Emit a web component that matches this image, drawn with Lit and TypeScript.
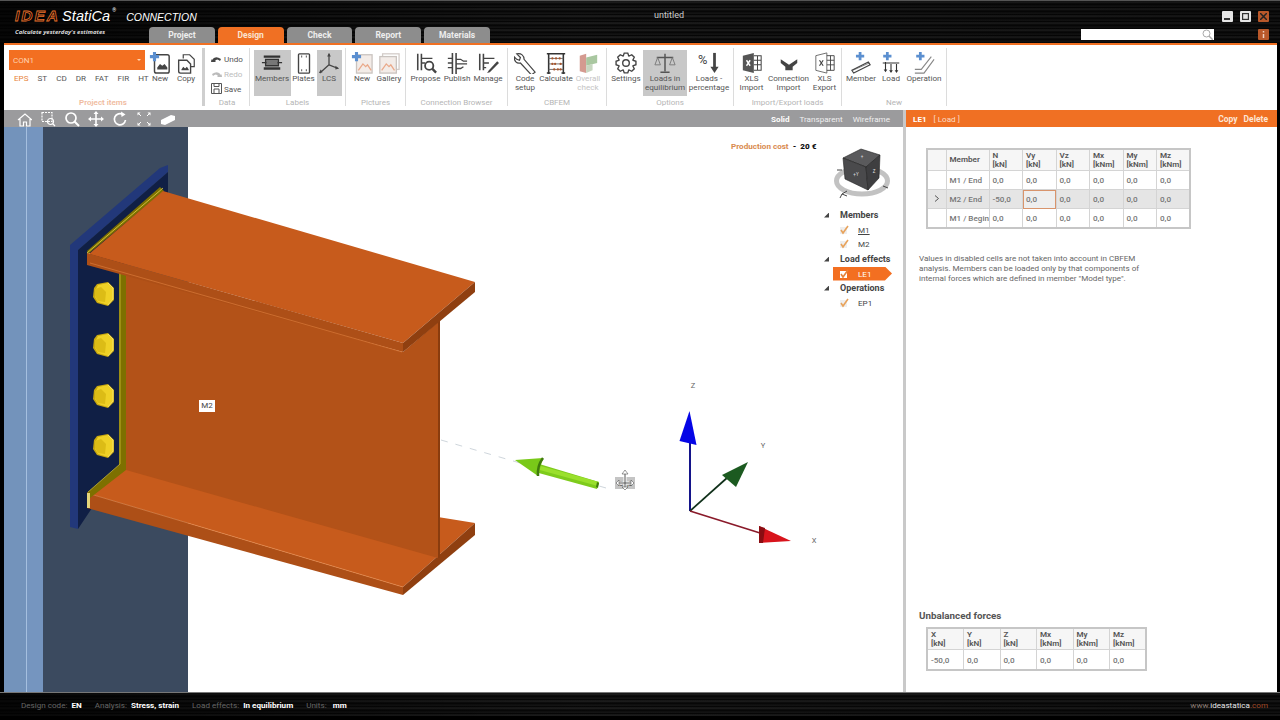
import { LitElement, html, svg, css } from "lit";
import { customElement } from "lit/decorators.js";

const S = (body: unknown, size = 22) => html`<svg
  width="${size}"
  height="${size}"
  viewBox="0 0 24 24"
  fill="none"
  stroke="#444"
  stroke-width="1.4"
>${body}</svg>`;

const PLUS = svg`<path d="M6 0v10M1 5h10" stroke="#5b8fd0" stroke-width="3.4" />`;
const PLUS_RIGHT = svg`<path d="M8 0v9M3.500 4.500h9" stroke="#5b8fd0" stroke-width="3" />`;

const gearPath = () => {
  const teeth = 8;
  let d = "";
  for (let i = 0; i < teeth; i++) {
    const a = (i / teeth) * Math.PI * 2;
    const w = Math.PI / teeth;
    const pts = [
      [8.2, a - w * 0.95],
      [11, a - w * 0.45],
      [11, a + w * 0.45],
      [8.2, a + w * 0.95],
    ];
    pts.forEach(([r, t], j) => {
      const x = (12 + r * Math.cos(t)).toFixed(2);
      const y = (12 + r * Math.sin(t)).toFixed(2);
      d += `${i === 0 && j === 0 ? "M" : "L"}${x} ${y}`;
    });
  }
  return d + "Z";
};

const ICONS: Record<string, unknown> = {
  newDoc: S(svg`
    <rect x="6" y="3" width="16" height="20" rx="2" stroke-width="1.6" />
    <path d="M9 17l3-4 2.500 2 2.500-2 3 4v2H9z" fill="#444" stroke="none" />
    ${PLUS}`),
  copyDoc: S(svg`
    <path d="M9 7V3h7l5 5v8h-4" stroke-width="1.3" />
    <path d="M4 9h9l4 4v10H6a2 2 0 0 1-2-2z" fill="#fff" stroke-width="1.5" />
    <path d="M7 19l2-3 2 2 2-2 2 3v1H7z" fill="#444" stroke="none" />`),
  members: S(svg`
    <path d="M3 5h18M3 18h18" stroke="#333" stroke-width="2.600" />
    <path d="M5 8h14v7H5z" fill="#777" stroke="#333" />
    <path d="M1 11.500h5M18 11.500h5" stroke="#333" />`),
  plates: S(svg`
    <rect x="6" y="2" width="12" height="21" rx="1" stroke-width="1.5" />
    <path d="M9 5h1M15 5h-1M9 20h1M15 20h-1" stroke-width="2.200" />`),
  lcs: S(svg`
    <path d="M12 14V2M12 14l10 4M12 14L2 23" stroke-width="1.4" />
    <path d="M12 1l-2 4h4zM23 18l-4-3v4zM1 23l4-1-2-3z" fill="#444" stroke="none" />`),
  picNew: S(svg`
    <rect x="6" y="3" width="17" height="20" fill="#f3ece8" stroke="#c9c3bf" />
    <path d="M8 20l5-7 3 3 2-2 4 6" stroke="#eaa98a" />
    ${PLUS}`),
  gallery: S(svg`
    <rect x="5" y="2" width="18" height="17" stroke="#d3ccc8" />
    <rect x="2" y="5" width="18" height="18" fill="#f3ece8" stroke="#c9c3bf" />
    <path d="M4 20l5-7 3 3 2-2 4 6" stroke="#eaa98a" />`),
  propose: S(svg`
    <path d="M3 2v18M7 2v18" stroke-width="1.700" />
    <path d="M7 7h12M7 12h4" />
    <circle cx="15.500" cy="15" r="4.500" stroke-width="2" />
    <path d="M19 18.500l4 4" stroke-width="2.600" />`),
  publish: S(svg`
    <path d="M7 1v23M11 1v23" stroke-width="1.700" />
    <path d="M2 7h5M2 12h5M2 17h5M11 8h5l3 2h4M11 13h12M11 18h5l3-2" />`),
  manage: S(svg`
    <path d="M3 2v18M7 2v18" stroke-width="1.700" />
    <path d="M7 7h12M7 12h6M7 17h3" />
    <path d="M22 10l-9 10-2 3 3-1 10-10z" fill="#444" stroke="none" />`),
  wrench: S(svg`
    <path d="M3 2l4 4-1 3-3-1-3-3c0 5 3 8 7 7l12 13 4-3L11 8C11 4 8 1 3 2z" stroke-width="1.300" />`),
  abacus: S(svg`
    <path d="M4 1v23M20 1v23M2 2h20M2 23h4M18 23h4" stroke="#333" stroke-width="1.700" />
    <path d="M4 7h16M4 13h16M4 19h16" stroke="#666" stroke-width="1" />
    <path d="M8 7h.1M12 7h.1M16 7h.1M8 13h.1M11 13h.1M17 13h.1M10 19h.1M14 19h.1M17 19h.1"
      stroke="#a8552c" stroke-width="2.400" stroke-linecap="round" />`),
  overall: S(svg`
    <path d="M3 4l7-2v21l-7-2z" fill="#d49a90" stroke="none" />
    <path d="M10 6l12-3v9l-12 3z" fill="#a9c7a0" stroke="none" />
    <path d="M10 15l7-2v7l-7 3z" fill="#c7d6c0" stroke="none" />`),
  gear: S(svg`
    <path d="${gearPath()}" stroke-width="1.500" />
    <circle cx="12" cy="12" r="3.600" stroke-width="1.500" />`),
  scales: S(svg`
    <path d="M12 2v19M7 22h10M3 6h18" stroke="#555" stroke-width="1.600" />
    <path d="M4 6L1 14h6zM20 6l-3 8h6z" stroke="#777" stroke-width="1" />`),
  percent: html`<svg width="22" height="22" viewBox="0 0 24 24">
    <text x="0" y="13" font-size="14" font-family="Roboto" fill="#444">%</text>
    <path d="M18 1v16" stroke="#444" stroke-width="3" />
    <path d="M13.500 16h9L18 23z" fill="#444" />
  </svg>`,
  xlsIn: S(svg`
    <path d="M2 4l12-3v22L2 20z" fill="#555" stroke="none" />
    <path d="M14 4h8v16h-8M14 9h8M14 14h8M18 4v16" stroke-width="1.100" />
    <path d="M6 9l4 6M10 9l-4 6" stroke="#fff" stroke-width="1.500" />`),
  connIn: S(svg`
    <path d="M3 8l9 6 9-6v4l-5 4v4H8v-4l-5-4z" fill="#444" stroke="none" />`),
  xlsOut: S(svg`
    <path d="M2 4l12-3v22L2 20z" fill="#fff" stroke="#666" stroke-width="1" />
    <path d="M14 4h8v16h-8M14 9h8M14 14h8M18 4v16" stroke-width="1" />
    <path d="M6 9l4 6M10 9l-4 6" stroke="#444" stroke-width="1.300" />`),
  addMember: S(svg`
    <path d="M2 20L20 11l2 3L4 23z" stroke-width="1.200" />
    <path d="M3 20l18-8" stroke-width=".7" />
    ${svg`<g transform="translate(3 0)">${PLUS_RIGHT}</g>`}`),
  addLoad: S(svg`
    <path d="M6 11v9M12 13v8M18 13v8M3 12h18" stroke="#333" stroke-width="1.200" />
    <path d="M4 19h4l-2 3zM10 20h4l-2 3zM16 20h4l-2 3z" fill="#333" stroke="none" />
    ${PLUS_RIGHT}`),
  addOp: S(svg`
    <path d="M2 23h10L23 8M2 19h7L20 5" stroke="#888" stroke-width="1.200" />
    ${PLUS_RIGHT}`),
};

const TOOL_ICONS = [
  svg`<path d="M2 9l7-6 7 6M4 8v7h3.500v-4h3v4H14V8" />`,
  svg`<rect x="2" y="1.500" width="10" height="9" stroke-dasharray="2 1" /><circle cx="10.500" cy="10.500" r="3" /><path d="M13 13l2 2" />`,
  svg`<circle cx="7" cy="7" r="5" stroke-width="1.700" /><path d="M10.500 10.500L15 15" stroke-width="2" />`,
  svg`<path d="M8 1v14M1 8h14" stroke-width="1.600" /><path d="M8 0l2.500 3h-5zM8 16l2.500-3h-5zM0 8l3-2.500v5zM16 8l-3-2.500v5z" fill="#fff" stroke="none" />`,
  svg`<path d="M13.500 9A5.600 5.600 0 1 1 11 3.500" stroke-width="1.700" /><path d="M9 .5l4.500 3-4 2.500z" fill="#fff" stroke="none" />`,
  svg`<path d="M2 2l3 3M14 2l-3 3M2 14l3-3M14 14l-3-3" stroke-width="1" /><path d="M1.500 1.500h3l-3 3zM14.500 1.500h-3l3 3zM1.500 14.500h3l-3-3zM14.500 14.500h-3l3-3z" fill="#fff" stroke="none" />`,
  svg`<path d="M1 9l10-5 4 1v4L5 14l-4-1z" fill="#fff" stroke="none" />`,
];

interface Btn {
  label: string[];
  icon: string;
  w: number;
  on?: boolean;
  off?: boolean;
}

interface Group {
  name: string;
  w: number;
  btns: Btn[];
}

const GROUPS: Group[] = [
  {
    name: "Labels",
    w: 96,
    btns: [
      { label: ["Members"], icon: "members", w: 37, on: true },
      { label: ["Plates"], icon: "plates", w: 26 },
      { label: ["LCS"], icon: "lcs", w: 25, on: true },
    ],
  },
  {
    name: "Pictures",
    w: 60,
    btns: [
      { label: ["New"], icon: "picNew", w: 27 },
      { label: ["Gallery"], icon: "gallery", w: 27 },
    ],
  },
  {
    name: "Connection Browser",
    w: 102,
    btns: [
      { label: ["Propose"], icon: "propose", w: 32 },
      { label: ["Publish"], icon: "publish", w: 31 },
      { label: ["Manage"], icon: "manage", w: 31 },
    ],
  },
  {
    name: "CBFEM",
    w: 99,
    btns: [
      { label: ["Code", "setup"], icon: "wrench", w: 30 },
      { label: ["Calculate"], icon: "abacus", w: 32 },
      { label: ["Overall", "check"], icon: "overall", w: 32, off: true },
    ],
  },
  {
    name: "Options",
    w: 127,
    btns: [
      { label: ["Settings"], icon: "gear", w: 34 },
      { label: ["Loads in", "equilibrium"], icon: "scales", w: 44, on: true },
      { label: ["Loads -", "percentage"], icon: "percent", w: 44 },
    ],
  },
  {
    name: "Import/Export loads",
    w: 108,
    btns: [
      { label: ["XLS", "Import"], icon: "xlsIn", w: 32 },
      { label: ["Connection", "Import"], icon: "connIn", w: 42 },
      { label: ["XLS", "Export"], icon: "xlsOut", w: 30 },
    ],
  },
  {
    name: "New",
    w: 105,
    btns: [
      { label: ["Member"], icon: "addMember", w: 32 },
      { label: ["Load"], icon: "addLoad", w: 28 },
      { label: ["Operation"], icon: "addOp", w: 38 },
    ],
  },
];

const TREE = [
  { title: "Members", items: [{ name: "M1", link: true }, { name: "M2" }] },
  { title: "Load effects", items: [{ name: "LE1", active: true }] },
  { title: "Operations", items: [{ name: "EP1" }] },
];

const LOADS = [
  ["M1 / End", "0,0", "0,0", "0,0", "0,0", "0,0", "0,0"],
  ["M2 / End", "-50,0", "0,0", "0,0", "0,0", "0,0", "0,0"],
  ["M1 / Begin", "0,0", "0,0", "0,0", "0,0", "0,0", "0,0"],
];

const bolt = (cy: number) => svg`
  <g transform="translate(0 ${cy - 294})">
    <path d="M97 284l11-2 6 6v12l-6 6-11-3-4-6 1-9z" fill="#c9a80f" />
    <path d="M98 285l10-2 5 5v11l-5 6-10-3-3-5 1-8z" fill="#efd126" />
    <path d="M95 289l6-2 5 5-1 10-7-1-3-5z" fill="#dcbc16" />
    <path d="M108 283l5 5v11l-5 6" stroke="#f7e97a" stroke-width=".8" fill="none" />
  </g>`;

@customElement("app-root")
export class AppRoot extends LitElement {
  static styles = css`
    :host {
      display: block;
      width: 1280px;
      height: 720px;
      overflow: hidden;
      background: #000;
      font-family: Roboto, "Open Sans", sans-serif;
      font-size: 8.1px;
      color: #555;
    }
    .streaks {
      background:
        linear-gradient(90deg, rgba(0, 0, 0, 0.75), rgba(0, 0, 0, 0.1) 45%, rgba(0, 0, 0, 0.3)),
        repeating-linear-gradient(180deg, #0a0a0a 0, #2b2b2b 1px, #111 2px, #050505 4px, #1d1d1d 5px, #000 7px);
    }
    .header {
      display: flex;
      height: 43px;
      box-sizing: border-box;
      border-top: 1px solid #555;
    }
    .brand {
      width: 149px;
      flex: none;
      padding: 6px 0 0 15px;
      box-sizing: border-box;
      color: #fff;
      white-space: nowrap;
    }
    .brand-line {
      display: flex;
      align-items: baseline;
      height: 15px;
    }
    .idea {
      font: italic bold 15.5px "Liberation Sans", sans-serif;
      color: transparent;
      -webkit-text-stroke: 0.8px #e8702a;
      letter-spacing: 2px;
      width: 47px;
      flex: none;
    }
    .statica {
      font: italic 14.5px "Liberation Sans", sans-serif;
      letter-spacing: 0.1px;
      flex: none;
    }
    .reg {
      font-size: 5px;
      margin: 0 0 0 2px;
      align-self: flex-start;
      flex: none;
    }
    .product {
      font: italic 10.5px "Liberation Sans", sans-serif;
      margin-left: 10px;
      flex: none;
    }
    .tagline {
      font: italic bold 6px "Open Sans", sans-serif;
      color: #ddd;
      margin-top: 6px;
    }
    .tabs {
      display: flex;
      gap: 3px;
      align-self: flex-end;
      width: 341px;
      flex: none;
    }
    .tab {
      width: 66px;
      height: 16px;
      background: #8d8d8d;
      border-radius: 4px 4px 0 0;
      color: #eee;
      font-weight: 700;
      font-size: 8.5px;
      line-height: 16px;
      text-align: center;
    }
    .tab.active {
      background: #f07023;
      color: #fbe3d2;
    }
    .title {
      width: 358px;
      flex: none;
      text-align: center;
      color: #ccc;
      font-size: 9px;
      padding-top: 9px;
    }
    .controls {
      flex: 1;
      display: flex;
      flex-direction: column;
      align-items: flex-end;
      padding: 10px 11px 0 0;
      gap: 7px;
    }
    .win-row {
      display: flex;
      gap: 7px;
      align-items: center;
    }
    .win-btn {
      width: 11px;
      height: 11px;
      border-radius: 1px;
      background: #e6e6e6;
      display: flex;
      align-items: center;
      justify-content: center;
    }
    .win-btn.hot {
      background: #b9582a;
    }
    .search {
      width: 133px;
      height: 11px;
      background: #fff;
      display: flex;
      justify-content: flex-end;
      margin-right: 44px;
      padding-right: 1px;
      box-sizing: border-box;
    }
    .info-row {
      gap: 0;
    }
    .frame {
      margin: 0 3px 0 4px;
      background: #fff;
    }
    .accent {
      height: 2px;
      background: #f07023;
    }
    .ribbon {
      display: flex;
      height: 65px;
      box-sizing: border-box;
      padding-top: 5px;
      background: #fff;
    }
    .group {
      display: flex;
      flex-direction: column;
      align-items: center;
      border-right: 1px solid #dcdcdc;
      box-sizing: border-box;
      height: 58px;
      margin-top: -2px;
      padding-top: 2px;
      flex: none;
    }
    .group-btns {
      display: flex;
      height: 46px;
      flex: none;
    }
    .group-name {
      color: #b5b5b5;
      font-size: 8px;
      line-height: 12px;
      margin-top: 1px;
    }
    .group-project {
      width: 201px;
      border-right: 3px solid #cfcfcf;
      align-items: stretch;
    }
    .project-top {
      display: flex;
      height: 46px;
      padding-left: 5px;
    }
    .project-left {
      width: 138px;
      flex: none;
    }
    .combo {
      width: 136px;
      height: 20px;
      background: #f36f21;
      color: #ffd3b0;
      line-height: 20px;
      padding: 0 4px;
      box-sizing: border-box;
      display: flex;
      justify-content: space-between;
      align-items: center;
    }
    .combo-caret {
      width: 0;
      height: 0;
      border: 2px solid transparent;
      border-top: 2px solid #ffd3b0;
      margin-top: 2px;
    }
    .subs {
      display: flex;
      gap: 9px;
      padding: 2px 0 0 5px;
      line-height: 12px;
      color: #555;
    }
    .subs .sel {
      color: #e8843c;
    }
    .group-project .group-name {
      text-align: center;
      color: #f0bb9e;
      font-weight: 600;
    }
    .group-data {
      width: 45px;
    }
    .small-list {
      height: 46px;
      width: 100%;
      padding: 1px 0 0 6px;
      box-sizing: border-box;
    }
    .small {
      display: flex;
      align-items: center;
      gap: 2px;
      height: 15px;
      white-space: nowrap;
    }
    .small.off {
      color: #bdbdbd;
    }
    .btn {
      display: flex;
      flex-direction: column;
      align-items: center;
      height: 46px;
      box-sizing: border-box;
      padding-top: 2px;
      line-height: 8.5px;
      text-align: center;
      white-space: nowrap;
      flex: none;
    }
    .btn.on {
      background: #c8c8c8;
    }
    .btn.off {
      color: #c4c4c4;
    }
    .btn-icon {
      height: 22px;
    }
    .btn-text {
      line-height: 8.5px;
    }
    .work {
      display: flex;
      height: 582px;
    }
    .left {
      width: 899px;
      flex: none;
      display: flex;
      flex-direction: column;
    }
    .bar {
      height: 17px;
      flex: none;
      display: flex;
      align-items: center;
      box-sizing: border-box;
      color: #fff;
    }
    .toolbar {
      background: #9b9b9d;
      padding: 0 13px 0 12px;
    }
    .tool-icons {
      display: flex;
      gap: 8px;
    }
    .tool-icon {
      stroke: #fff;
      fill: none;
      stroke-width: 1.2;
    }
    .modes {
      margin-left: auto;
      display: flex;
      gap: 10px;
      color: #f0f0f0;
    }
    .modes b {
      font-weight: 700;
      color: #fff;
    }
    .canvas {
      position: relative;
      flex: 1;
      overflow: hidden;
      background: #fff;
    }
    .scene {
      position: absolute;
      inset: 0;
    }
    .member-tag {
      position: absolute;
      left: 195px;
      top: 273px;
      width: 16px;
      height: 12px;
      background: #fff;
      color: #444;
      font-size: 8px;
      line-height: 12px;
      text-align: center;
    }
    .cost {
      position: absolute;
      left: 727px;
      top: 14px;
      font-weight: 700;
      color: #d98a4e;
      white-space: nowrap;
    }
    .cost b {
      color: #111;
    }
    .tree {
      position: absolute;
      left: 820px;
      top: 80.500px;
      width: 72px;
    }
    .tree-head {
      display: flex;
      align-items: center;
      height: 15px;
      font-weight: 700;
      color: #444;
      white-space: nowrap;
      font-size: 9px;
    }
    .caret {
      width: 5px;
      height: 5px;
      background: #444;
      clip-path: polygon(100% 0, 100% 100%, 0 100%);
      margin: 0 11px 0 0;
      flex: none;
    }
    .tree-item {
      display: flex;
      align-items: center;
      gap: 9px;
      height: 14.500px;
      padding-left: 15px;
      color: #444;
    }
    .tree-item .link {
      text-decoration: underline;
    }
    .tree-item.active {
      background: #f36f21;
      color: #fff;
      margin-left: 9px;
      width: 59px;
      height: 14px;
      padding-left: 6px;
      box-sizing: border-box;
      clip-path: polygon(0 0, 88% 0, 100% 50%, 88% 100%, 0 100%);
    }
    .split {
      width: 3px;
      flex: none;
      background: #c9c9c9;
    }
    .right {
      flex: 1;
      display: flex;
      flex-direction: column;
      min-width: 0;
    }
    .panel-head {
      background: #f07023;
      padding: 0 9px 0 7px;
      color: #fbdcc6;
    }
    .panel-head b {
      color: #fff;
      margin-right: 7px;
      font-weight: 700;
    }
    .panel-actions {
      margin-left: auto;
      display: flex;
      gap: 6px;
      font-weight: 700;
      color: #fde6d6;
      font-size: 8.5px;
    }
    .panel-body {
      flex: 1;
      display: flex;
      flex-direction: column;
      padding: 21px 0 21px 13px;
      background: #fff;
    }
    table {
      border-collapse: collapse;
      table-layout: fixed;
      margin-left: 7px;
      border: 2px solid #c6c6c6;
      color: #777;
    }
    .loads {
      width: 265px;
    }
    .unbalanced {
      width: 221px;
    }
    col.mark {
      width: 19px;
    }
    col.member {
      width: 43px;
    }
    th,
    td {
      border: 1px solid #d4d4d4;
      padding: 0 0 0 3px;
      font-weight: 500;
      text-align: left;
      height: 18px;
      white-space: nowrap;
      overflow: hidden;
    }
    th {
      height: 20px;
      background: #f6f6f6;
      color: #555;
      line-height: 9.500px;
      font-weight: 600;
    }
    .unbalanced td {
      height: 19px;
    }
    tr.sel td {
      background: #e5e5e5;
    }
    tr.sel td.cur {
      background: #eee;
      outline: 1px solid #d8946c;
      outline-offset: -1px;
    }
    td.mark {
      text-align: center;
      padding: 0;
    }
    .note {
      margin: 24px 0 0;
      line-height: 10px;
      color: #666;
    }
    .spacer {
      flex: 1;
    }
    .unb-title {
      font-weight: 700;
      font-size: 9.800px;
      color: #555;
      margin-bottom: 5px;
      line-height: 13px;
    }
    .status {
      height: 24px;
      display: flex;
      align-items: center;
      padding: 0 12px 0 21px;
      box-sizing: border-box;
      color: #666;
      border-top: 1px solid #777;
    }
    .status span {
      margin-right: 13px;
      white-space: nowrap;
    }
    .status b {
      color: #fff;
      font-weight: 700;
      margin-left: 2px;
    }
    .site {
      margin-left: auto;
      color: #8a7a72;
    }
    .site i {
      color: #e8e8e8;
      font-style: normal;
    }
    .site u {
      color: #a04a28;
      text-decoration: none;
    }
  `;

  renderHeader() {
    return html`<div class="header streaks">
      <div class="brand">
        <div class="brand-line">
          <span class="idea">IDEA</span><span class="statica">StatiCa</span
          ><span class="reg">®</span><span class="product">CONNECTION</span>
        </div>
        <div class="tagline">Calculate yesterday's estimates</div>
      </div>
      <div class="tabs">
        ${["Project", "Design", "Check", "Report", "Materials"].map(
          (t) => html`<div class="tab ${t === "Design" ? "active" : ""}">${t}</div>`
        )}
      </div>
      <div class="title">untitled</div>
      <div class="controls">
        <div class="win-row">
          <div class="win-btn">
            <svg width="7" height="7"><path d="M0 6h6" stroke="#333" stroke-width="2" /></svg>
          </div>
          <div class="win-btn">
            <svg width="7" height="7"><rect x=".5" y=".5" width="6" height="6" fill="none" stroke="#333" stroke-width="1.400" /></svg>
          </div>
          <div class="win-btn hot">
            <svg width="7" height="7"><path d="M0 0l7 7M7 0l-7 7" stroke="#222" stroke-width="1.500" /></svg>
          </div>
        </div>
        <div class="win-row info-row">
          <div class="search">
            <svg width="11" height="11" viewBox="0 0 11 11" fill="none" stroke="#aaa">
              <circle cx="4.500" cy="4.500" r="3.500" /><path d="M7 7l4 4" stroke-width="1.500" />
            </svg>
          </div>
          <div class="win-btn hot">
            <svg width="3" height="7"><path d="M1.500 0v1.500M1.500 3v4" stroke="#f0d0c0" stroke-width="1.500" /></svg>
          </div>
        </div>
      </div>
    </div>`;
  }

  renderRibbon() {
    return html`<div class="ribbon">
      <div class="group group-project">
        <div class="project-top">
          <div class="project-left">
            <div class="combo">CON1<span class="combo-caret"></span></div>
            <div class="subs">
              ${["EPS", "ST", "CD", "DR", "FAT", "FIR", "HT"].map(
                (s) => html`<span class="${s === "EPS" ? "sel" : ""}">${s}</span>`
              )}
            </div>
          </div>
          ${this.renderBtn({ label: ["New"], icon: "newDoc", w: 26 })}
          ${this.renderBtn({ label: ["Copy"], icon: "copyDoc", w: 26 })}
        </div>
        <div class="group-name">Project items</div>
      </div>
      <div class="group group-data">
        <div class="small-list">
          <div class="small">
            <svg width="11" height="10" viewBox="0 0 11 10"><path d="M1 6q3-5 9-1l-1 2q-3-3-5 0l1 1H0l.5-3z" fill="#444" /></svg>Undo
          </div>
          <div class="small off">
            <svg width="11" height="10" viewBox="0 0 11 10"><path d="M10 6Q7 1 1 5l1 2q3-3 5 0L6 8h5l-.5-3z" fill="#bbb" /></svg>Redo
          </div>
          <div class="small">
            <svg width="11" height="11" viewBox="0 0 11 11" fill="none" stroke="#555"><path d="M.5.500h10v10H.500zM3 10.500V6h5v4.500M3 .5v3h5v-3" /></svg>Save
          </div>
        </div>
        <div class="group-name">Data</div>
      </div>
      ${GROUPS.map(
        (g) => html`<div class="group" style="width:${g.w}px">
          <div class="group-btns">${g.btns.map((b) => this.renderBtn(b))}</div>
          <div class="group-name">${g.name}</div>
        </div>`
      )}
    </div>`;
  }

  renderBtn(b: Btn) {
    return html`<div
      class="btn ${b.on ? "on" : ""} ${b.off ? "off" : ""}"
      style="width:${b.w}px"
    >
      <div class="btn-icon">${ICONS[b.icon]}</div>
      ${b.label.map((l) => html`<div class="btn-text">${l}</div>`)}
    </div>`;
  }

  renderScene() {
    return html`<svg class="scene" width="899" height="565" viewBox="4 127 899 565">
      <rect x="4" y="127" width="22" height="565" fill="#7393bb" />
      <rect x="26" y="127" width="1" height="565" fill="#a5bfdf" />
      <rect x="27" y="127" width="16" height="565" fill="#7595bf" />
      <rect x="43" y="127" width="145" height="565" fill="#3b4a5f" />

      <path d="M70 245L160 168l8-3v7L78 250v279l-8-2z" fill="#22387a" />
      <path d="M78 250l90-78v24l-48 76v194L78 529z" fill="#101f45" />

      <path d="M87 493l35-27 353 57-72 64z" fill="#c75b1c" />
      <path d="M87 493l316 94v8L87 508z" fill="#ad4f17" />
      <path d="M403 587l72-64v12l-72 60z" fill="#8f3f10" />
      <path d="M87 493l316 94" stroke="#e8894a" stroke-width=".7" fill="none" />

      <path d="M126 272L403 352l35-30v236L126 470z" fill="#b35218" />
      <path d="M438 318h2v240h-2z" fill="#8a3c0e" />
      <path d="M119 272h7v198l-36 28-3-5 32-28z" fill="#7d7000" />
      <path d="M120 272v192L88 492" stroke="#d9c63a" stroke-width=".7" fill="none" />
      <path d="M87 493h3v15h-3zM87 253h3v12h-3z" fill="#e6d67a" />

      <path d="M87 251l73-64 4 4-76 63z" fill="#7d7000" />
      <path d="M87 253l76-65" stroke="#e4d04a" stroke-width=".8" fill="none" />
      <path d="M89 254l74-63 312 91-72 61z" fill="#c75b1c" />
      <path d="M87 253l316 90v9L87 265z" fill="#ad4f17" />
      <path d="M403 343l72-61v10l-72 60z" fill="#8f3f10" />
      <path d="M90 263l312 89" stroke="#e0813f" stroke-width=".6" fill="none" />

      ${[294, 345, 396, 446].map(bolt)}

      <path d="M441 440L606 488" stroke="#cfd6dc" stroke-width="1" stroke-dasharray="7 8" />
      <path d="M536 463l-1 9 62 17 2-7z" fill="#7ecb1c" />
      <path d="M536 469l62 17 1-4-62-17z" fill="#9ae02c" />
      <path d="M597 482l2 1-1 5-2-1z" fill="#3f7a0c" />
      <path d="M515 460l28-2-5 18z" fill="#79c919" />
      <path d="M543 458q-6 8-5 18" stroke="#3f7a0c" stroke-width="2.500" fill="none" />

      <rect x="615" y="477" width="20" height="12" fill="#c4c4c4" />
      <text x="625" y="486" text-anchor="middle" font-size="7" fill="#444" font-family="Roboto">-50,0</text>
      <path d="M625 471v17M617 483h16" stroke="#fff" stroke-width="3" />
      <path d="M625 471v17M617 483h16" stroke="#555" stroke-width="1" />
      <path d="M625 470l-3 4h6zM616 483l3-3v6zM634 483l-3-3v6zM625 490l-3-3h6z" fill="#fff" stroke="#555" stroke-width=".6" />

      <path d="M690 511V440" stroke="#14148a" stroke-width="2" />
      <path d="M689.500 411l-10 30 17 4z" fill="#0505e6" />
      <path d="M690 511l38-34" stroke="#10301a" stroke-width="1.700" />
      <path d="M748 462l-26 13 14 12z" fill="#1c5a20" />
      <path d="M690 511l70 22" stroke="#8a1a2a" stroke-width="1.700" />
      <path d="M759 526l32 15-32 2z" fill="#d8141c" />
      <path d="M759 526l6 2-2 15h-4z" fill="#8a0d12" />
      <g font-family="Roboto" font-size="7.500" fill="#666" text-anchor="middle">
        <text x="693" y="388">Z</text>
        <text x="763" y="448">Y</text>
        <text x="814" y="543">X</text>
      </g>

      <g>
        <ellipse cx="862" cy="181" rx="25.500" ry="13" fill="none" stroke="#c2c2c2" stroke-width="5" />
        <path d="M847 191l-5 3M842 194l-2 4M842 194l5 2M842 170h-5M883 186l5 2" stroke="#444" stroke-width="1" />
        <path d="M843 158l18-9 19 6-14 12z" fill="#5a5a5c" stroke="#222" stroke-width=".6" />
        <path d="M843 158l23 9 2 23-23-11z" fill="#4a4a4c" stroke="#222" stroke-width=".6" />
        <path d="M866 167l14-12-1 23-11 12z" fill="#3e3e40" stroke="#222" stroke-width=".6" />
        <g font-family="Roboto" font-size="4.500" fill="#ddd" text-anchor="middle">
          <text x="856" y="176">+Y</text>
          <text x="874" y="173">Z</text>
          <text x="862" y="158">+</text>
        </g>
      </g>
    </svg>`;
  }

  renderTree() {
    return html`<div class="tree">
      ${TREE.map(
        (sec) => html`<div class="tree-head"><span class="caret"></span>${sec.title}</div>
          ${sec.items.map(
            (it: { name: string; link?: boolean; active?: boolean }) => html`<div
              class="tree-item ${it.active ? "active" : ""}"
            >
              <svg width="10" height="10" viewBox="0 0 10 10">
                <rect x="1" y="2" width="7" height="7" fill="${it.active ? "#fff" : "#eee"}" />
                <path
                  d="M2 5l2 3 5-7"
                  fill="none"
                  stroke="${it.active ? "#e8843c" : "#e8a35c"}"
                  stroke-width="1.600"
                />
              </svg>
              <span class="${it.link ? "link" : ""}">${it.name}</span>
            </div>`
          )}`
      )}
    </div>`;
  }

  renderPanel() {
    const heads = ["N", "Vy", "Vz", "Mx", "My", "Mz"];
    const unit = (h: string) => (h.startsWith("M") ? "[kNm]" : "[kN]");
    return html`<div class="right">
      <div class="bar panel-head">
        <b>LE1</b>[ Load ]
        <div class="panel-actions"><span>Copy</span><span>Delete</span></div>
      </div>
      <div class="panel-body">
        <table class="loads">
          <colgroup>
            <col class="mark" /><col class="member" />
            ${heads.map(() => html`<col />`)}
          </colgroup>
          <tr>
            <th></th>
            <th>Member</th>
            ${heads.map((h) => html`<th>${h}<br />${unit(h)}</th>`)}
          </tr>
          ${LOADS.map(
            (row, i) => html`<tr class="${i === 1 ? "sel" : ""}">
              <td class="mark">
                ${i === 1
                  ? html`<svg width="6" height="7"><path d="M1 .5l3.500 3L1 6.500" fill="none" stroke="#555" /></svg>`
                  : ""}
              </td>
              ${row.map(
                (c, j) => html`<td class="${i === 1 && j === 2 ? "cur" : ""}">${c}</td>`
              )}
            </tr>`
          )}
        </table>
        <p class="note">
          Values in disabled cells are not taken into account in CBFEM<br />
          analysis. Members can be loaded only by that components of<br />
          internal forces which are defined in member "Model type".
        </p>
        <div class="spacer"></div>
        <div class="unb-title">Unbalanced forces</div>
        <table class="unbalanced">
          <tr>
            ${["X", "Y", "Z", "Mx", "My", "Mz"].map((h) => html`<th>${h}<br />${unit(h)}</th>`)}
          </tr>
          <tr>
            ${["-50,0", "0,0", "0,0", "0,0", "0,0", "0,0"].map((c) => html`<td>${c}</td>`)}
          </tr>
        </table>
      </div>
    </div>`;
  }

  render() {
    return html`
      ${this.renderHeader()}
      <div class="frame">
        <div class="accent"></div>
        ${this.renderRibbon()}
        <div class="work">
          <div class="left">
            <div class="bar toolbar">
              <div class="tool-icons">
                ${TOOL_ICONS.map(
                  (t) => html`<svg class="tool-icon" width="16" height="16" viewBox="0 0 16 16">${t}</svg>`
                )}
              </div>
              <div class="modes"><b>Solid</b><span>Transparent</span><span>Wireframe</span></div>
            </div>
            <div class="canvas">
              ${this.renderScene()}
              <div class="member-tag">M2</div>
              <div class="cost">Production cost <b>&nbsp;-&nbsp; 20 €</b></div>
              ${this.renderTree()}
            </div>
          </div>
          <div class="split"></div>
          ${this.renderPanel()}
        </div>
      </div>
      <div class="status streaks">
        <span>Design code: <b>EN</b></span>
        <span>Analysis: <b>Stress, strain</b></span>
        <span>Load effects: <b>In equilibrium</b></span>
        <span>Units: <b>&nbsp;mm</b></span>
        <div class="site">www.<i>ideastatica</i><u>.com</u></div>
      </div>
    `;
  }
}
